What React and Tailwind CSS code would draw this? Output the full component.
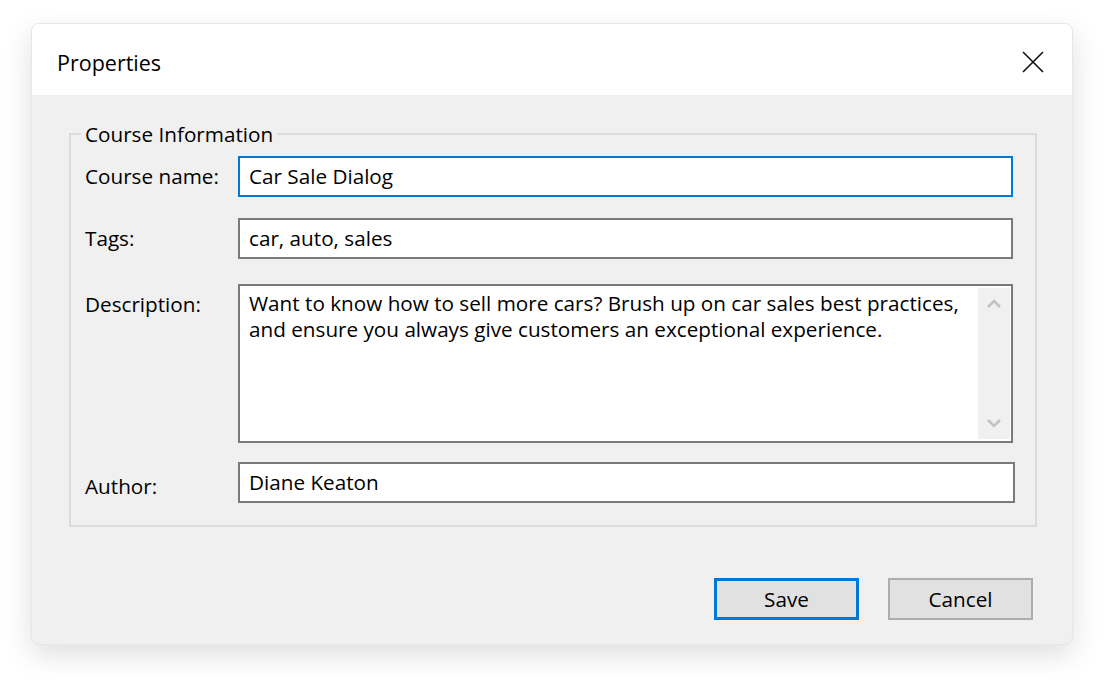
import React from "react";

const font = { fontFamily: '"Segoe UI", "Open Sans", "Noto Sans", sans-serif' };

const Chevron = ({ down }) => (
  <svg width="16" height="12" viewBox="0 0 16 12" className="text-[#c2c2c2]">
    <path
      d={down ? "M2 3 L8 9 L14 3" : "M2 9 L8 3 L14 9"}
      fill="none"
      stroke="currentColor"
      strokeWidth="2.5"
    />
  </svg>
);

const App = () => {
  return (
    <div className="min-h-screen w-full bg-white text-black" style={font}>
      <div className="pl-[31px] pt-[23px]">
        <div className="w-[1042px] h-[622px] rounded-[8px] overflow-hidden border border-[#e6e6e6] shadow-[0_10px_28px_rgba(0,0,0,0.13)] flex flex-col bg-[#f0f0f0]">
          {/* ===== TITLE BAR ===== */}
          <div className="h-[71px] bg-white flex items-center justify-between pl-[25px] pr-[28px] pt-[7px]">
            <span className="text-[21.5px] leading-none">Properties</span>
            <svg width="22" height="22" viewBox="0 0 22 22" className="-mt-[3px]">
              <path d="M1 1 L21 21 M21 1 L1 21" stroke="#111" strokeWidth="1.6" />
            </svg>
          </div>

          {/* ===== BODY ===== */}
          <div className="flex-1 flex flex-col px-[37px] text-[20.7px]">
            <fieldset className="mt-[26px] w-[968px] border-2 border-[#dcdcdc] pl-[10px] pr-[20px] pb-[22px]">
              <legend className="px-[4px] leading-[26px]">Course Information</legend>

              <div className="flex items-center mt-[9px] pl-[4px]">
                <span className="w-[153px]">Course name:</span>
                <div className="w-[775px] h-[41px] border-2 border-[#0078d7] bg-white flex items-center px-[9px]">
                  Car Sale Dialog
                </div>
              </div>

              <div className="flex items-center mt-[21px] pl-[4px]">
                <span className="w-[153px]">Tags:</span>
                <div className="w-[775px] h-[41px] border-2 border-[#7a7a7a] bg-white flex items-center px-[9px]">
                  car, auto, sales
                </div>
              </div>

              <div className="flex items-start mt-[25px] pl-[4px]">
                <span className="w-[153px] mt-[5px]">Description:</span>
                <div className="w-[775px] h-[159px] border-2 border-[#7a7a7a] bg-white flex">
                  <p className="flex-1 px-[9px] pt-[4px] leading-[26px]">
                    Want to know how to sell more cars? Brush up on car sales best practices,
                    and ensure you always give customers an exceptional experience.
                  </p>
                  <div className="w-[32px] mt-[2px] mb-[2px] mr-[1px] bg-[#f0f0f0] flex flex-col items-center justify-between py-[10px]">
                    <Chevron />
                    <Chevron down />
                  </div>
                </div>
              </div>

              <div className="flex items-center mt-[19px] pl-[4px]">
                <span className="w-[153px] mt-[8px]">Author:</span>
                <div className="w-[777px] h-[41px] border-2 border-[#7a7a7a] bg-white flex items-center px-[9px]">
                  Diane Keaton
                </div>
              </div>
            </fieldset>

            {/* ===== BUTTONS ===== */}
            <div className="flex justify-end gap-[29px] mt-[51px] pr-[2px]">
              <button className="w-[145px] h-[42px] border-[3px] border-[#0078d7] bg-[#e1e1e1] pt-[2px]">
                Save
              </button>
              <button className="w-[145px] h-[42px] border-2 border-[#adadad] bg-[#e1e1e1] pt-[2px]">
                Cancel
              </button>
            </div>
          </div>
        </div>
      </div>
    </div>
  );
};

export default App;
